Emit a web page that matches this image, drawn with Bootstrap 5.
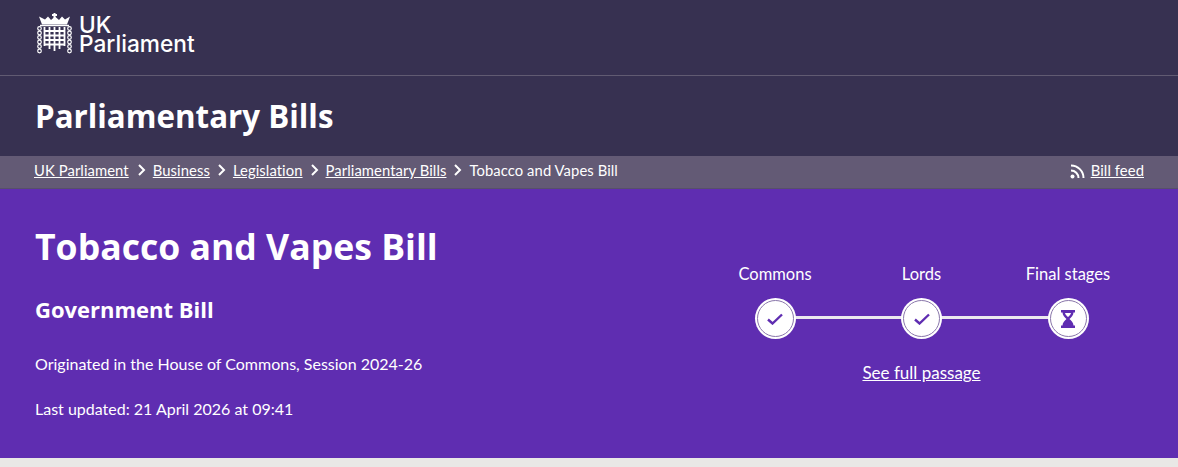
<!DOCTYPE html>
<html lang="en">
<head>
    <meta charset="UTF-8">
    <meta name="viewport" content="width=device-width, initial-scale=1.0">
    <title>Tobacco and Vapes Bill</title>
    <link rel="stylesheet" href="https://cdn.jsdelivr.net/npm/bootstrap@5.3.0/dist/css/bootstrap.min.css">
    <style>
        body { background: #e9e8e6; font-family: "Lato", "Liberation Sans", sans-serif; color: #fff; }
        a { color: #fff; }
        a:hover { color: #fff; }
        .site-top { background: #373151; height: 76px; border-bottom: 1px solid #615b72; padding: 13px 35px 0 37px; }
        .logo-mark { width: 35px; height: 41px; }
        .logo-text { font-family: "Inter", sans-serif; font-size: 22.700px; font-weight: 500; line-height: 19px; margin-left: 7px; margin-top: 2px; }
        .title-band { background: #373151; height: 80px; padding: 0 35px; }
        .title-band h2 { font-family: "Open Sans", sans-serif; font-size: 31.300px; font-weight: 700; margin: 0; line-height: 80px; color: #fff; }
        .crumb-bar { background: #635a75; height: 33px; padding: 0 34px 4px; font-size: 14.800px; letter-spacing: .08px; border-bottom: 1px solid #57506b; }
        .crumb-bar .breadcrumb { margin: 0; --bs-breadcrumb-divider: none; }
        .crumb-bar .breadcrumb-item + .breadcrumb-item { padding-left: 0; }
        .crumb-bar .breadcrumb-item + .breadcrumb-item::before { display: none; }
        .crumb-sep { width: 9px; height: 12px; margin: 0 7px; }
        .crumb-sep-first { margin-left: 8px; }
        .crumb-now { color: #fff; }
        .feed-icon { width: 15px; height: 15px; margin-right: 6px; margin-top: 3px; }
        .bill-hero { background: #5f2db1; height: 269px; padding: 0 34px 0 35px; }
        .bill-hero h1 { font-family: "Open Sans", sans-serif; font-size: 35.600px; font-weight: 700; line-height: 44px; margin: 35px 0 0; }
        .bill-hero h3 { font-family: "Open Sans", sans-serif; font-size: 22px; font-weight: 700; line-height: 28px; margin: 27px 0 0; }
        .bill-hero p { font-size: 16px; line-height: 24px; margin: 0; }
        .origin-line { margin-top: 29px !important; }
        .updated-line { margin-top: 21px !important; }
        .stage-box { width: 385px; margin-left: auto; margin-right: 30px; padding-top: 73px; font-size: 16.500px; }
        .stage-row { position: relative; }
        .stage-col { width: 92px; }
        .stage-label { line-height: 24px; height: 24px; white-space: nowrap; }
        .stage-dot { width: 41px; height: 41px; border-radius: 50%; background: #fff; display: flex; align-items: center; justify-content: center; margin: 12px auto 0; position: relative; z-index: 1; }
        .stage-dot::before { content: ""; position: absolute; inset: 2px; border-radius: 50%; border: 1px solid #8a77ab; }
        .stage-line { position: absolute; left: 46px; right: 46px; top: 54px; height: 3px; background: #ebe9ee; }
        .passage-link { display: block; text-align: center; margin-top: 22px; line-height: 24px; font-size: 17px; }
    </style>
</head>
<body>
<!-- Top bar -->
<div class="site-top">
    <div class="d-flex">
        <svg class="logo-mark" viewBox="0 0 35 41" fill="none" stroke="#fff" aria-hidden="true">
            <path d="M17.500 0v5M15 2h5" stroke-width="2"/>
            <path d="M2 3.500l3 8h25l3-8-5 3-3-3-3 3.500-4-3.500-4 3.500-3-3.500-3 3z" fill="#fff" stroke="none"/>
            <path d="M3 12.500h29" stroke-width="1.500"/>
            <path d="M7.500 14v19M12.500 14v22M17.500 14v24M22.500 14v22M27.500 14v19M7 18h21M7 22.500h21M7 27h21M7 31.500h21" stroke-width="1.800"/>
            <g stroke-width="1.200">
                <circle cx="2.500" cy="15.500" r="1.800"/><circle cx="2.500" cy="20" r="1.800"/><circle cx="2.500" cy="24.500" r="1.800"/><circle cx="2.500" cy="29" r="1.800"/><circle cx="2.500" cy="33.500" r="1.800"/><circle cx="2.500" cy="38" r="1.800"/>
                <circle cx="32.500" cy="15.500" r="1.800"/><circle cx="32.500" cy="20" r="1.800"/><circle cx="32.500" cy="24.500" r="1.800"/><circle cx="32.500" cy="29" r="1.800"/><circle cx="32.500" cy="33.500" r="1.800"/><circle cx="32.500" cy="38" r="1.800"/>
            </g>
        </svg>
        <div class="logo-text">UK<br>Parliament</div>
    </div>
</div>

<!-- Section title -->
<div class="title-band"><h2>Parliamentary Bills</h2></div>

<!-- Breadcrumb -->
<div class="crumb-bar d-flex justify-content-between align-items-center">
    <ol class="breadcrumb align-items-center">
        <li class="breadcrumb-item"><a href="#">UK Parliament</a></li>
        <li class="breadcrumb-item d-flex align-items-center"><svg class="crumb-sep crumb-sep-first" viewBox="0 0 9 12" fill="none" stroke="#fff" stroke-width="2"><path d="M2 1l5 5-5 5"/></svg><a href="#">Business</a></li>
        <li class="breadcrumb-item d-flex align-items-center"><svg class="crumb-sep" viewBox="0 0 9 12" fill="none" stroke="#fff" stroke-width="2"><path d="M2 1l5 5-5 5"/></svg><a href="#">Legislation</a></li>
        <li class="breadcrumb-item d-flex align-items-center"><svg class="crumb-sep" viewBox="0 0 9 12" fill="none" stroke="#fff" stroke-width="2"><path d="M2 1l5 5-5 5"/></svg><a href="#">Parliamentary Bills</a></li>
        <li class="breadcrumb-item d-flex align-items-center crumb-now"><svg class="crumb-sep" viewBox="0 0 9 12" fill="none" stroke="#fff" stroke-width="2"><path d="M2 1l5 5-5 5"/></svg>Tobacco and Vapes Bill</li>
    </ol>
    <div class="d-flex align-items-center">
        <svg class="feed-icon" viewBox="0 0 15 15" fill="none" stroke="#fff" stroke-width="2"><circle cx="2.500" cy="12.500" r="2" fill="#fff" stroke="none"/><path d="M1 6.500a7.500 7.500 0 0 1 7.500 7.500M1 1.500a12.500 12.500 0 0 1 12.500 12.500"/></svg>
        <a href="#">Bill feed</a>
    </div>
</div>

<!-- Bill summary -->
<div class="bill-hero d-flex justify-content-between">
    <div>
        <h1>Tobacco and Vapes Bill</h1>
        <h3>Government Bill</h3>
        <p class="origin-line">Originated in the House of Commons, Session 2024-26</p>
        <p class="updated-line">Last updated: 21 April 2026 at 09:41</p>
    </div>
    <div class="stage-box">
        <div class="stage-row d-flex justify-content-between text-center">
            <div class="stage-line"></div>
            <div class="stage-col">
                <div class="stage-label">Commons</div>
                <div class="stage-dot"><svg width="16" height="12" viewBox="0 0 16 12" fill="none" stroke="#5f2db1" stroke-width="2.400"><path d="M1 6.500l4.500 4L15 1.500"/></svg></div>
            </div>
            <div class="stage-col">
                <div class="stage-label">Lords</div>
                <div class="stage-dot"><svg width="16" height="12" viewBox="0 0 16 12" fill="none" stroke="#5f2db1" stroke-width="2.400"><path d="M1 6.500l4.500 4L15 1.500"/></svg></div>
            </div>
            <div class="stage-col">
                <div class="stage-label">Final stages</div>
                <div class="stage-dot"><svg width="14" height="18" viewBox="0 0 14 18" fill="#5f2db1"><path d="M0 0h14v2.500h-1.500c0 3-2.400 4.700-4 6.500 1.600 1.800 4 3.500 4 6.500H14V18H0v-2.500h1.500c0-3 2.400-4.700 4-6.500-1.600-1.800-4-3.500-4-6.500H0z"/><path d="M4 3h6c-.4 1.600-1.800 3-3 4-1.200-1-2.600-2.400-3-4z" fill="#fff"/></svg></div>
            </div>
        </div>
        <a class="passage-link" href="#">See full passage</a>
    </div>
</div>
</body>
</html>
